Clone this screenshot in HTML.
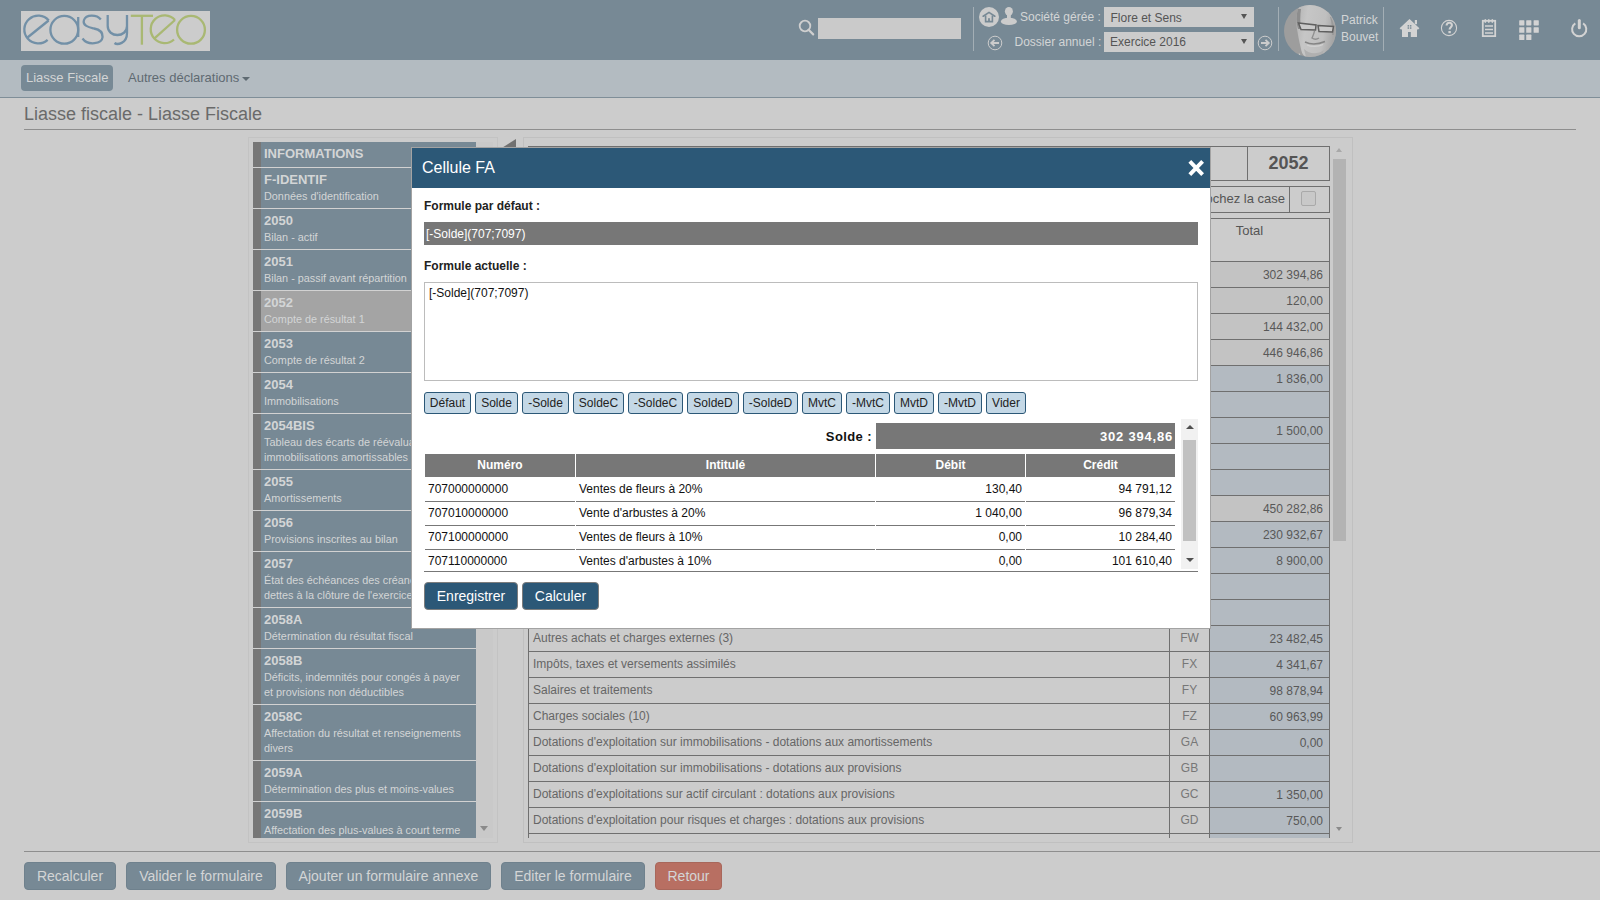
<!DOCTYPE html>
<html><head><meta charset="utf-8"><title>Liasse fiscale</title>
<style>
*{box-sizing:border-box;margin:0;padding:0}
html,body{width:1600px;height:900px;overflow:hidden;background:#cccccc;font-family:"Liberation Sans",sans-serif;position:relative}
.a{position:absolute}
.t{position:absolute;white-space:nowrap;line-height:1}
#hdr{left:0;top:0;width:1600px;height:60px;background:#778995}
.sep{position:absolute;width:1px;top:7px;height:44px;background:#a3aeb5}
#nav{left:0;top:60px;width:1600px;height:38px;background:#b3bbc1;border-bottom:1px solid #7f8e98}
.pill{left:21px;top:65px;width:92px;height:26px;border-radius:4px;background:#778995}

#sb{left:248px;top:137px;width:250px;height:706px;border:1px solid #c3c3c3}
#sbl{left:253px;top:142px;width:223px;height:696px;overflow:hidden}
.it{position:relative;height:41px;background:#778995;border-bottom:1px solid #d2d2d2;padding:3px 0 0 11px;color:#d3d5d6;white-space:nowrap;overflow:hidden}
.it:before{content:"";position:absolute;left:0;top:0;bottom:0;width:8px;background:#777777}
.it b{display:block;font-size:13px;line-height:17px}
.it span{display:block;position:relative;top:1px;font-size:10.85px;line-height:15px;white-space:normal;width:200px}
.it.h{height:26px}
.it.two{height:56px}
.it.act{background:#a4a4a4}
.sbtrack{left:476px;top:142px;width:17px;height:696px;background:#c9c9c9}

#mp{left:523px;top:137px;width:830px;height:706px;border:1px solid #c0c0c0}
.ln{position:absolute;background:#6f6f6f}
.lbl{position:absolute;left:533px;font-size:12px;line-height:1;color:#666666;white-space:nowrap}
.code{position:absolute;left:1170px;width:39px;text-align:center;font-size:12px;line-height:1;color:#777777}
.val{position:absolute;left:1210px;width:113px;text-align:right;font-size:12px;line-height:1;color:#585858}

#modal{left:411px;top:147px;width:800px;height:482px;border:1px solid #a3a3a3;background:#ffffff}
.mb{position:absolute;top:392px;height:22px;border:1px solid #2c5877;border-radius:3px;background:#c4d8e6;font-size:12px;line-height:20px;text-align:center;color:#222222}
.th{position:absolute;top:454px;height:23px;background:#777777;color:#ffffff;font-size:12px;font-weight:bold;line-height:23px;text-align:center}
.tr{position:absolute;height:1px;background:#777777}
.tc{position:absolute;font-size:12px;line-height:1;color:#111111;white-space:nowrap}
.bb{position:absolute;top:862px;height:28px;border-radius:4px;background:#778995;border:1px solid #6f818d;color:#d3d5d6;font-size:14px;line-height:26px;text-align:center}
</style></head><body>
<div id="hdr" class="a">
  <div class="a" style="left:21px;top:11px;width:189px;height:40px;background:#cccccc"></div>
  <svg class="a" style="left:0;top:0" width="220" height="60" viewBox="0 0 220 60">
    <g fill="none" stroke="#7290a7" stroke-width="2.3">
      <path d="M48.8 20.5 A13.9 13.9 0 1 0 47.6 39.8"/>
      <line x1="27.5" y1="37.5" x2="48.6" y2="20.5"/>
      <circle cx="64.3" cy="29.8" r="13.9"/>
      <line x1="78.2" y1="17" x2="78.2" y2="37"/>
      <path d="M100.8 19.5 C97 14.5 86 14 84 20 C82 26 90 27.5 94 28.5 C99 29.5 103 31.5 102.6 37 C102 44 88 46 82.5 38.5"/>
      <path d="M107.7 15 L107.7 26 C107.7 38 127 38 127 26 L127 15 M127 26 L127 33 C127 44 117 45 114.5 43"/>
    </g>
    <g fill="none" stroke="#a9b873" stroke-width="2.3">
      <line x1="130.8" y1="15.8" x2="153" y2="15.8"/>
      <line x1="141.9" y1="15.5" x2="141.9" y2="44.7"/>
      <path d="M175 20 A13.9 13.9 0 1 0 174 39.5"/>
      <line x1="154.2" y1="38.6" x2="175" y2="20"/>
      <circle cx="191" cy="29.8" r="13.9"/>
    </g>
  </svg>

  <svg class="a" style="left:796px;top:18px" width="20" height="20" viewBox="0 0 20 20">
    <circle cx="9" cy="8" r="5.3" fill="none" stroke="#cfcfcf" stroke-width="1.8"/>
    <line x1="12.6" y1="11.8" x2="17.2" y2="16.4" stroke="#cfcfcf" stroke-width="2.2" stroke-linecap="round"/>
  </svg>
  <div class="a" style="left:818px;top:18px;width:143px;height:21px;background:#cacaca"></div>
  <div class="sep" style="left:973px"></div>
  <div class="sep" style="left:1278px"></div>
  <div class="sep" style="left:1383px"></div>
  <svg class="a" style="left:978px;top:6px" width="42" height="22" viewBox="0 0 42 22">
    <circle cx="11" cy="11" r="10" fill="#cccccc"/>
    <path d="M5.2 10.2 L11 6.4 L16.8 10.2" fill="none" stroke="#778995" stroke-width="1.7" stroke-linejoin="miter" stroke-linecap="round"/>
    <path d="M7.6 9.6 L7.6 15.6 L14.4 15.6 L14.4 9.6" fill="none" stroke="#778995" stroke-width="1.6"/>
    <rect x="10.1" y="12.2" width="1.8" height="3.4" fill="#778995"/>
    <ellipse cx="30.9" cy="5.3" rx="4" ry="4.4" fill="#cccccc"/>
    <rect x="29" y="8" width="3.8" height="4.5" fill="#cccccc"/>
    <ellipse cx="30.9" cy="15.4" rx="8" ry="3.6" fill="#cccccc"/>
  </svg>
  <div class="t" style="left:1020px;top:11px;font-size:12px;color:#d3d5d6">Société gérée :</div>
  <div class="a" style="left:1104px;top:7px;width:150px;height:20px;background:#cccccc"></div>
  <div class="t" style="left:1110.5px;top:11.5px;font-size:12px;color:#555">Flore et Sens</div>
  <div class="a" style="left:1241px;top:14px;width:0;height:0;border-left:3.2px solid transparent;border-right:3.2px solid transparent;border-top:5.2px solid #555"></div>
  <svg class="a" style="left:986px;top:34px" width="18" height="18" viewBox="0 0 18 18">
    <circle cx="9" cy="9" r="6.8" fill="none" stroke="#cccccc" stroke-width="1"/>
    <path d="M13 9 L5.5 9 M8.5 5.8 L5.2 9 L8.5 12.2" fill="none" stroke="#cccccc" stroke-width="1.8"/>
  </svg>
  <div class="t" style="left:1014.5px;top:36px;font-size:12px;color:#d3d5d6">Dossier annuel :</div>
  <div class="a" style="left:1104px;top:32px;width:150px;height:20px;background:#cccccc"></div>
  <div class="t" style="left:1110px;top:36px;font-size:12px;color:#555">Exercice 2016</div>
  <div class="a" style="left:1241px;top:39px;width:0;height:0;border-left:3.2px solid transparent;border-right:3.2px solid transparent;border-top:5.2px solid #555"></div>
  <svg class="a" style="left:1256px;top:34px" width="18" height="18" viewBox="0 0 18 18">
    <circle cx="9" cy="9" r="6.8" fill="none" stroke="#cccccc" stroke-width="1"/>
    <path d="M5 9 L12.5 9 M9.5 5.8 L12.8 9 L9.5 12.2" fill="none" stroke="#cccccc" stroke-width="1.8"/>
  </svg>
  <svg class="a" style="left:1284px;top:5px" width="52" height="52" viewBox="0 0 52 52">
    <defs><clipPath id="av"><circle cx="26" cy="26" r="26"/></clipPath>
    <filter id="bl" x="-10%" y="-10%" width="120%" height="120%"><feGaussianBlur stdDeviation="0.6"/></filter>
    <linearGradient id="fg" x1="0" y1="0" x2="1" y2="0.2"><stop offset="0" stop-color="#b2b2b2"/><stop offset="0.3" stop-color="#c6c6c6"/><stop offset="0.75" stop-color="#bfbfbf"/><stop offset="1" stop-color="#a6a6a6"/></linearGradient></defs>
    <g clip-path="url(#av)">
      <rect width="52" height="52" fill="#9d9d9d"/>
      <g filter="url(#bl)">
      <path d="M15 2 C22 -2 38 -1 46 6 C53 13 54 28 50 38 C46 47 38 52 28 53 C21 53 18 50 17 44 C15 36 14 30 13 24 C12 16 12 8 15 2 Z" fill="url(#fg)"/>
      <path d="M14 4 C12 10 12 18 14 24 L17 24 C16 18 16 10 17 4 Z" fill="#8d8d8d"/>
      <path d="M47 12 C50 18 51 24 50 30 L48 30 C48 24 48 18 46 12 Z" fill="#9a9a9a"/>
      <path d="M14.5 18 L32 20 L31.5 25 L17 24.5 Z M34 20.5 L49.5 21.5 L48.5 27 L35 26.5 Z" fill="#c9c9c9" stroke="#5e5e5e" stroke-width="1.5"/>
      <path d="M30.5 26 C30 29 29 31 28 33 C30 34.5 33 34.5 35 33" fill="none" stroke="#8f8f8f" stroke-width="1.4"/>
      <path d="M21 37 C26 39.5 34 39.5 41 36.5" fill="none" stroke="#858585" stroke-width="1.5"/>
      <path d="M23 40 C27 42 34 42 39 39.5" fill="none" stroke="#d2d2d2" stroke-width="1.2"/>
      <path d="M20 44 C25 49 33 50 40 45 L38 52 L22 52 Z" fill="#b0b0b0"/>
      </g>
      <path d="M15 48 C17 52 20 53 24 53 L14 53 Z" fill="#dedede"/>
    </g>
  </svg>
  <div class="t" style="left:1341px;top:14px;font-size:12px;color:#d3d5d6">Patrick</div>
  <div class="t" style="left:1341px;top:31px;font-size:12px;color:#d3d5d6">Bouvet</div>
  <svg class="a" style="left:1398px;top:17px" width="24" height="22" viewBox="0 0 24 22">
    <path d="M2.4 12 L11.5 3.6 L20.6 12" fill="none" stroke="#d3d3d3" stroke-width="2.3" stroke-linejoin="miter"/>
    <rect x="16.8" y="3" width="2.2" height="4.2" fill="#d3d3d3"/>
    <path d="M4 11 L11.5 4.8 L19 11 L19 20 L12.8 20 L12.8 15 L10 15 L10 20 L4 20 Z" fill="#d3d3d3"/>
    <g fill="#778995"><rect x="9.6" y="8.1" width="1.5" height="1.5"/><rect x="11.9" y="8.1" width="1.5" height="1.5"/><rect x="9.6" y="10.3" width="1.5" height="1.5"/><rect x="11.9" y="10.3" width="1.5" height="1.5"/></g>
  </svg>
  <svg class="a" style="left:1439px;top:18px" width="20" height="20" viewBox="0 0 20 20">
    <circle cx="10" cy="10" r="7.6" fill="none" stroke="#d3d3d3" stroke-width="1.1"/>
    <path d="M7.6 7.6 C7.6 5.6 8.8 4.8 10.2 4.8 C11.9 4.8 12.9 5.8 12.9 7.3 C12.9 9.2 10.6 9.4 10.6 11.6" fill="none" stroke="#d3d3d3" stroke-width="2.1"/>
    <rect x="9.4" y="13" width="2.4" height="2.2" fill="#d3d3d3"/>
  </svg>
  <svg class="a" style="left:1480px;top:18px" width="18" height="21" viewBox="0 0 18 21">
    <rect x="2.8" y="2.8" width="12.4" height="15.3" fill="none" stroke="#d3d3d3" stroke-width="1.8"/>
    <g fill="#d3d3d3"><ellipse cx="5.3" cy="3.1" rx="1" ry="2"/><ellipse cx="8.8" cy="3.1" rx="1" ry="2"/><ellipse cx="12.3" cy="3.1" rx="1" ry="2"/></g>
    <path d="M5 8.1 H13 M5 11.4 H13 M5 15 H13" stroke="#d3d3d3" stroke-width="1.5"/>
  </svg>
  <svg class="a" style="left:1518px;top:19px" width="22" height="22" viewBox="0 0 22 22">
    <g fill="#d3d3d3">
      <rect x="1.2" y="1.2" width="5.2" height="5.2" rx="0.6"/><rect x="8.2" y="1.2" width="5.2" height="5.2" rx="0.6"/><rect x="15.6" y="1.2" width="5.2" height="5.2" rx="0.6"/>
      <rect x="1.2" y="8.2" width="5.2" height="5.6" rx="0.6"/><rect x="8.2" y="8.2" width="5.2" height="5.6" rx="0.6"/><rect x="15.6" y="8.2" width="5.2" height="5.6" rx="0.6"/>
      <rect x="1.2" y="15.6" width="5.2" height="5.4" rx="0.6"/><rect x="8.2" y="15.6" width="5.2" height="5.4" rx="0.6"/>
    </g>
  </svg>
  <svg class="a" style="left:1569px;top:18px" width="20" height="21" viewBox="0 0 20 21">
    <path d="M6.3 5.3 A7.1 7.1 0 1 0 14.1 5.3" fill="none" stroke="#d3d3d3" stroke-width="2"/>
    <line x1="10.3" y1="2.6" x2="10.3" y2="9.8" stroke="#d3d3d3" stroke-width="3" stroke-linecap="round"/>
  </svg>
</div>
<div id="nav" class="a"></div>
<div class="a pill"></div>
<div class="t" style="left:26px;top:71px;font-size:13px;color:#d3d5d6">Liasse Fiscale</div>
<div class="t" style="left:128px;top:71px;font-size:13px;color:#5f6a72">Autres déclarations</div>
<div class="a" style="left:242px;top:77px;width:0;height:0;border-left:4px solid transparent;border-right:4px solid transparent;border-top:4px solid #5f6a72"></div>
<div class="t" style="left:24px;top:105px;font-size:18px;color:#6a6a6a">Liasse fiscale - Liasse Fiscale</div>
<div class="a" style="left:24px;top:129px;width:1552px;height:1px;background:#8e8e8e"></div>
<div id="sb" class="a"></div>
<div class="a sbtrack"></div>
<div id="sbl" class="a">
<div class="it h"><b>INFORMATIONS</b></div>
<div class="it "><b>F-IDENTIF</b><span>Données d'identification</span></div>
<div class="it "><b>2050</b><span>Bilan - actif</span></div>
<div class="it "><b>2051</b><span>Bilan - passif avant répartition</span></div>
<div class="it act"><b>2052</b><span>Compte de résultat 1</span></div>
<div class="it "><b>2053</b><span>Compte de résultat 2</span></div>
<div class="it "><b>2054</b><span>Immobilisations</span></div>
<div class="it two"><b>2054BIS</b><span>Tableau des écarts de réévaluation sur immobilisations amortissables</span></div>
<div class="it "><b>2055</b><span>Amortissements</span></div>
<div class="it "><b>2056</b><span>Provisions inscrites au bilan</span></div>
<div class="it two"><b>2057</b><span>État des échéances des créances et des dettes à la clôture de l'exercice</span></div>
<div class="it "><b>2058A</b><span>Détermination du résultat fiscal</span></div>
<div class="it two"><b>2058B</b><span>Déficits, indemnités pour congés à payer et provisions non déductibles</span></div>
<div class="it two"><b>2058C</b><span>Affectation du résultat et renseignements divers</span></div>
<div class="it "><b>2059A</b><span>Détermination des plus et moins-values</span></div>
<div class="it "><b>2059B</b><span>Affectation des plus-values à court terme</span></div>
<div class="it "><b>2059C</b><span>Suivi des moins-values à long terme</span></div>
</div>
<div class="a" style="left:480px;top:826px;width:0;height:0;border-left:4px solid transparent;border-right:4px solid transparent;border-top:5px solid #8a8a8a"></div>
<svg class="a" style="left:494px;top:138px" width="24" height="16"><path d="M22 1 L22 14 L1.5 14 Z" fill="#717171"/></svg>
<div id="mp" class="a"></div>
<div class="a" style="left:528px;top:142px;width:803px;height:696px;overflow:hidden">
<div class="a" style="left:-528px;top:-142px;width:1600px;height:900px">
<div class="ln" style="left:528px;top:146px;width:802px;height:1px"></div><div class="ln" style="left:528px;top:180px;width:802px;height:1px"></div><div class="ln" style="left:528px;top:146px;width:1px;height:35px"></div><div class="ln" style="left:1247px;top:146px;width:1px;height:35px"></div><div class="ln" style="left:1329px;top:146px;width:1px;height:35px"></div>
<div class="t" style="left:1248px;width:81px;text-align:center;top:154px;font-size:18px;font-weight:bold;color:#555555">2052</div>
<div class="ln" style="left:528px;top:186px;width:802px;height:1px"></div><div class="ln" style="left:528px;top:212px;width:802px;height:1px"></div><div class="ln" style="left:528px;top:186px;width:1px;height:27px"></div><div class="ln" style="left:1289px;top:186px;width:1px;height:27px"></div><div class="ln" style="left:1329px;top:186px;width:1px;height:27px"></div>
<div class="t" style="left:1000px;width:285px;text-align:right;top:192px;font-size:13px;color:#555555">Pour modifier les valeurs, cochez la case</div>
<div class="a" style="left:1301px;top:191px;width:15px;height:15px;border:1px solid #a9a9a9;border-radius:2px;background:#c8c8c8"></div>
<div class="ln" style="left:528px;top:218px;width:802px;height:1px"></div><div class="t" style="left:1210px;width:79px;text-align:center;top:224px;font-size:13px;color:#555555">Total</div>
<div class="a" style="left:1210px;top:262px;width:119px;height:25px;background:#c3c3c3"></div><div class="ln" style="left:528px;top:261px;width:802px;height:1px"></div><div class="lbl" style="top:268px">Ventes de marchandises</div><div class="code" style="top:268px">FC</div><div class="val" style="top:269px">302 394,86</div>
<div class="a" style="left:1210px;top:288px;width:119px;height:25px;background:#c3c3c3"></div><div class="ln" style="left:528px;top:287px;width:802px;height:1px"></div><div class="lbl" style="top:294px">Production vendue biens</div><div class="code" style="top:294px">FF</div><div class="val" style="top:295px">120,00</div>
<div class="a" style="left:1210px;top:314px;width:119px;height:25px;background:#c3c3c3"></div><div class="ln" style="left:528px;top:313px;width:802px;height:1px"></div><div class="lbl" style="top:320px">Production vendue services</div><div class="code" style="top:320px">FI</div><div class="val" style="top:321px">144 432,00</div>
<div class="a" style="left:1210px;top:340px;width:119px;height:25px;background:#c3c3c3"></div><div class="ln" style="left:528px;top:339px;width:802px;height:1px"></div><div class="lbl" style="top:346px">Chiffres d'affaires nets</div><div class="code" style="top:346px">FL</div><div class="val" style="top:347px">446 946,86</div>
<div class="a" style="left:1210px;top:366px;width:119px;height:25px;background:#b3bac1"></div><div class="ln" style="left:528px;top:365px;width:802px;height:1px"></div><div class="lbl" style="top:372px">Production stockée</div><div class="code" style="top:372px">FM</div><div class="val" style="top:373px">1 836,00</div>
<div class="a" style="left:1210px;top:392px;width:119px;height:25px;background:#b3bac1"></div><div class="ln" style="left:528px;top:391px;width:802px;height:1px"></div><div class="lbl" style="top:398px">Production immobilisée</div><div class="code" style="top:398px">FN</div>
<div class="a" style="left:1210px;top:418px;width:119px;height:25px;background:#b3bac1"></div><div class="ln" style="left:528px;top:417px;width:802px;height:1px"></div><div class="lbl" style="top:424px">Subventions d'exploitation</div><div class="code" style="top:424px">FO</div><div class="val" style="top:425px">1 500,00</div>
<div class="a" style="left:1210px;top:444px;width:119px;height:25px;background:#b3bac1"></div><div class="ln" style="left:528px;top:443px;width:802px;height:1px"></div><div class="lbl" style="top:450px">Reprises sur amortissements et provisions, transfert de charges</div><div class="code" style="top:450px">FP</div>
<div class="a" style="left:1210px;top:470px;width:119px;height:25px;background:#b3bac1"></div><div class="ln" style="left:528px;top:469px;width:802px;height:1px"></div><div class="lbl" style="top:476px">Autres produits</div><div class="code" style="top:476px">FQ</div>
<div class="a" style="left:1210px;top:496px;width:119px;height:25px;background:#c3c3c3"></div><div class="ln" style="left:528px;top:495px;width:802px;height:1px"></div><div class="lbl" style="top:502px">Total des produits d'exploitation</div><div class="code" style="top:502px">FR</div><div class="val" style="top:503px">450 282,86</div>
<div class="a" style="left:1210px;top:522px;width:119px;height:25px;background:#b3bac1"></div><div class="ln" style="left:528px;top:521px;width:802px;height:1px"></div><div class="lbl" style="top:528px">Achats de marchandises</div><div class="code" style="top:528px">FS</div><div class="val" style="top:529px">230 932,67</div>
<div class="a" style="left:1210px;top:548px;width:119px;height:25px;background:#b3bac1"></div><div class="ln" style="left:528px;top:547px;width:802px;height:1px"></div><div class="lbl" style="top:554px">Variation de stock (marchandises)</div><div class="code" style="top:554px">FT</div><div class="val" style="top:555px">8 900,00</div>
<div class="a" style="left:1210px;top:574px;width:119px;height:25px;background:#b3bac1"></div><div class="ln" style="left:528px;top:573px;width:802px;height:1px"></div><div class="lbl" style="top:580px">Achats de matières premières et autres approvisionnements</div><div class="code" style="top:580px">FU</div>
<div class="a" style="left:1210px;top:600px;width:119px;height:25px;background:#b3bac1"></div><div class="ln" style="left:528px;top:599px;width:802px;height:1px"></div><div class="lbl" style="top:606px">Variation de stock (matières premières et approvisionnements)</div><div class="code" style="top:606px">FV</div>
<div class="a" style="left:1210px;top:626px;width:119px;height:25px;background:#b3bac1"></div><div class="ln" style="left:528px;top:625px;width:802px;height:1px"></div><div class="lbl" style="top:632px">Autres achats et charges externes (3)</div><div class="code" style="top:632px">FW</div><div class="val" style="top:633px">23 482,45</div>
<div class="a" style="left:1210px;top:652px;width:119px;height:25px;background:#b3bac1"></div><div class="ln" style="left:528px;top:651px;width:802px;height:1px"></div><div class="lbl" style="top:658px">Impôts, taxes et versements assimilés</div><div class="code" style="top:658px">FX</div><div class="val" style="top:659px">4 341,67</div>
<div class="a" style="left:1210px;top:678px;width:119px;height:25px;background:#b3bac1"></div><div class="ln" style="left:528px;top:677px;width:802px;height:1px"></div><div class="lbl" style="top:684px">Salaires et traitements</div><div class="code" style="top:684px">FY</div><div class="val" style="top:685px">98 878,94</div>
<div class="a" style="left:1210px;top:704px;width:119px;height:25px;background:#b3bac1"></div><div class="ln" style="left:528px;top:703px;width:802px;height:1px"></div><div class="lbl" style="top:710px">Charges sociales (10)</div><div class="code" style="top:710px">FZ</div><div class="val" style="top:711px">60 963,99</div>
<div class="a" style="left:1210px;top:730px;width:119px;height:25px;background:#b3bac1"></div><div class="ln" style="left:528px;top:729px;width:802px;height:1px"></div><div class="lbl" style="top:736px">Dotations d'exploitation sur immobilisations - dotations aux amortissements</div><div class="code" style="top:736px">GA</div><div class="val" style="top:737px">0,00</div>
<div class="a" style="left:1210px;top:756px;width:119px;height:25px;background:#b3bac1"></div><div class="ln" style="left:528px;top:755px;width:802px;height:1px"></div><div class="lbl" style="top:762px">Dotations d'exploitation sur immobilisations - dotations aux provisions</div><div class="code" style="top:762px">GB</div>
<div class="a" style="left:1210px;top:782px;width:119px;height:25px;background:#b3bac1"></div><div class="ln" style="left:528px;top:781px;width:802px;height:1px"></div><div class="lbl" style="top:788px">Dotations d'exploitations sur actif circulant : dotations aux provisions</div><div class="code" style="top:788px">GC</div><div class="val" style="top:789px">1 350,00</div>
<div class="a" style="left:1210px;top:808px;width:119px;height:25px;background:#b3bac1"></div><div class="ln" style="left:528px;top:807px;width:802px;height:1px"></div><div class="lbl" style="top:814px">Dotations d'exploitation pour risques et charges : dotations aux provisions</div><div class="code" style="top:814px">GD</div><div class="val" style="top:815px">750,00</div>
<div class="a" style="left:1210px;top:834px;width:119px;height:25px;background:#b3bac1"></div><div class="ln" style="left:528px;top:833px;width:802px;height:1px"></div><div class="lbl" style="top:840px">Autres charges</div><div class="code" style="top:840px">GE</div>
<div class="ln" style="left:528px;top:218px;width:1px;height:640px"></div><div class="ln" style="left:1169px;top:261px;width:1px;height:600px"></div><div class="ln" style="left:1209px;top:218px;width:1px;height:640px"></div><div class="ln" style="left:1329px;top:218px;width:1px;height:640px"></div>
</div>
<div class="a" style="left:803px;top:0;width:17px;height:696px;background:#c8c8c8"></div></div>
<div class="a" style="left:1333px;top:159px;width:13px;height:382px;background:#b3b3b3"></div>
<div class="a" style="left:1336px;top:148px;width:0;height:0;border-left:3.5px solid transparent;border-right:3.5px solid transparent;border-bottom:4px solid #a8a8a8"></div>
<div class="a" style="left:1336px;top:827px;width:0;height:0;border-left:3.5px solid transparent;border-right:3.5px solid transparent;border-top:4px solid #8a8a8a"></div>
<div id="modal" class="a"></div>
<div class="a" style="left:412px;top:148px;width:798px;height:40px;background:#2c5877"></div>
<div class="t" style="left:422px;top:160px;font-size:16px;color:#ffffff">Cellule FA</div>
<svg class="a" style="left:1186px;top:158px" width="20" height="20" viewBox="0 0 20 20"><path d="M3.8 3.4 L16.6 16.6 M16.6 3.4 L3.8 16.6" stroke="#ffffff" stroke-width="3.9" stroke-linecap="butt"/></svg>
<div class="t" style="left:424px;top:200px;font-size:12px;font-weight:bold;color:#222222">Formule par défaut :</div>
<div class="a" style="left:424px;top:222px;width:774px;height:23px;background:#777777"></div>
<div class="t" style="left:426px;top:228px;font-size:12px;color:#ffffff">[-Solde](707;7097)</div>
<div class="t" style="left:424px;top:260px;font-size:12px;font-weight:bold;color:#222222">Formule actuelle :</div>
<div class="a" style="left:424px;top:282px;width:774px;height:99px;border:1px solid #bcbcbc"></div>
<div class="t" style="left:429px;top:287px;font-size:12px;color:#111111">[-Solde](707;7097)</div>
<div class="mb" style="left:424px;width:47px">Défaut</div><div class="mb" style="left:475px;width:43px">Solde</div><div class="mb" style="left:522px;width:47px">-Solde</div><div class="mb" style="left:573px;width:51px">SoldeC</div><div class="mb" style="left:628px;width:55px">-SoldeC</div><div class="mb" style="left:687px;width:52px">SoldeD</div><div class="mb" style="left:743px;width:55px">-SoldeD</div><div class="mb" style="left:802px;width:40px">MvtC</div><div class="mb" style="left:846px;width:44px">-MvtC</div><div class="mb" style="left:894px;width:40px">MvtD</div><div class="mb" style="left:938px;width:44px">-MvtD</div><div class="mb" style="left:986px;width:40px">Vider</div>
<div class="t" style="left:700px;width:172px;text-align:right;top:430px;font-size:13px;font-weight:bold;letter-spacing:0.4px;color:#111111">Solde :</div>
<div class="a" style="left:876px;top:423px;width:299px;height:26px;background:#777777"></div>
<div class="t" style="left:880px;width:293px;text-align:right;top:430px;font-size:13px;font-weight:bold;letter-spacing:0.8px;color:#ffffff">302 394,86</div>
<div class="th" style="left:425px;width:150px">Numéro</div><div class="th" style="left:576px;width:299px">Intitulé</div><div class="th" style="left:876px;width:149px">Débit</div><div class="th" style="left:1026px;width:149px">Crédit</div>
<div class="tc" style="left:428px;top:483px">707000000000</div><div class="tc" style="left:579px;top:483px">Ventes de fleurs à 20%</div><div class="tc" style="left:876px;width:146px;text-align:right;top:483px">130,40</div><div class="tc" style="left:1026px;width:146px;text-align:right;top:483px">94 791,12</div><div class="tr" style="left:425px;top:501px;width:150px"></div><div class="tr" style="left:576px;top:501px;width:299px"></div><div class="tr" style="left:876px;top:501px;width:149px"></div><div class="tr" style="left:1026px;top:501px;width:149px"></div>
<div class="tc" style="left:428px;top:507px">707010000000</div><div class="tc" style="left:579px;top:507px">Vente d'arbustes à 20%</div><div class="tc" style="left:876px;width:146px;text-align:right;top:507px">1 040,00</div><div class="tc" style="left:1026px;width:146px;text-align:right;top:507px">96 879,34</div><div class="tr" style="left:425px;top:525px;width:150px"></div><div class="tr" style="left:576px;top:525px;width:299px"></div><div class="tr" style="left:876px;top:525px;width:149px"></div><div class="tr" style="left:1026px;top:525px;width:149px"></div>
<div class="tc" style="left:428px;top:531px">707100000000</div><div class="tc" style="left:579px;top:531px">Ventes de fleurs à 10%</div><div class="tc" style="left:876px;width:146px;text-align:right;top:531px">0,00</div><div class="tc" style="left:1026px;width:146px;text-align:right;top:531px">10 284,40</div><div class="tr" style="left:425px;top:549px;width:150px"></div><div class="tr" style="left:576px;top:549px;width:299px"></div><div class="tr" style="left:876px;top:549px;width:149px"></div><div class="tr" style="left:1026px;top:549px;width:149px"></div>
<div class="tc" style="left:428px;top:555px">707110000000</div><div class="tc" style="left:579px;top:555px">Ventes d'arbustes à 10%</div><div class="tc" style="left:876px;width:146px;text-align:right;top:555px">0,00</div><div class="tc" style="left:1026px;width:146px;text-align:right;top:555px">101 610,40</div>
<div class="a" style="left:412px;top:572px;width:798px;height:56px;background:#ffffff"></div>
<div class="tr" style="left:424px;top:571px;width:774px"></div>
<div class="a" style="left:1181px;top:419px;width:17px;height:150px;background:#f1f1f1"></div>
<div class="a" style="left:1183px;top:440px;width:13px;height:101px;background:#c1c1c1"></div>
<div class="a" style="left:1185.5px;top:425px;width:0;height:0;border-left:4px solid transparent;border-right:4px solid transparent;border-bottom:4.5px solid #505050"></div>
<div class="a" style="left:1185.5px;top:558px;width:0;height:0;border-left:4px solid transparent;border-right:4px solid transparent;border-top:4.5px solid #505050"></div>
<div class="a" style="left:424px;top:582px;width:94px;height:28px;border-radius:4px;background:#2c5877;border:1px solid #7d7d7d;color:#fff;font-size:14px;line-height:26px;text-align:center">Enregistrer</div>
<div class="a" style="left:522px;top:582px;width:77px;height:28px;border-radius:4px;background:#2c5877;border:1px solid #7d7d7d;color:#fff;font-size:14px;line-height:26px;text-align:center">Calculer</div>
<div class="a" style="left:24px;top:851px;width:1576px;height:1px;background:#8e8e8e"></div>
<div class="bb" style="left:24px;width:92px;">Recalculer</div>
<div class="bb" style="left:126px;width:150px;">Valider le formulaire</div>
<div class="bb" style="left:286px;width:205px;">Ajouter un formulaire annexe</div>
<div class="bb" style="left:501px;width:144px;">Editer le formulaire</div>
<div class="bb" style="left:655px;width:67px;background:#b86f62;border-color:#a8675b">Retour</div>
</body></html>
